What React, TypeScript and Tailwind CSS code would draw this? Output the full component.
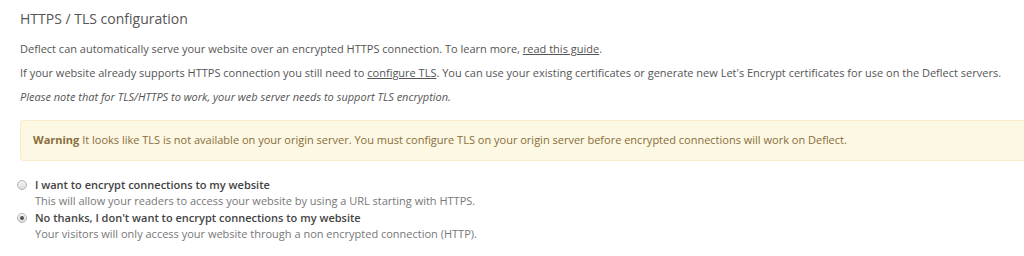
import React from 'react';

const App: React.FC = () => {
    return (
        <div className="w-[1024px] h-[256px] overflow-hidden bg-white text-[#555] font-['Open_Sans',sans-serif]">
            <div className="pl-5 pt-[9px]">
                <h3 className="text-[14px] leading-5 text-[#555]">HTTPS / TLS configuration</h3>

                <div className="mt-[8px] text-[11px] leading-6">
                    <p>
                        Deflect can automatically serve your website over an encrypted HTTPS connection. To learn more,{' '}
                        <a className="underline">read this guide</a>.
                    </p>
                    <p>
                        If your website already supports HTTPS connection you still need to{' '}
                        <a className="underline">configure TLS</a>. You can use your existing certificates or generate new Let's Encrypt certificates for use on the Deflect servers.
                    </p>
                    <p className="italic">Please note that for TLS/HTTPS to work, your web server needs to support TLS encryption.</p>
                </div>

                {/* Warning */}
                <div className="mt-[11px] h-[41px] flex items-center px-3 bg-[#fcf8e3] border border-[#faebcc] border-r-0 rounded-l text-[11px] text-[#8a6d3b]">
                    <span><b className="font-bold">Warning</b> It looks like TLS is not available on your origin server. You must configure TLS on your origin server before encrypted connections will work on Deflect.</span>
                </div>

                {/* Radios */}
                <div className="mt-[16px] -ml-[3px] text-[11px]">
                    <label className="flex items-start gap-[8px]">
                        <span className="mt-[3px] w-[10px] h-[10px] rounded-full border border-[#b5b5b5] bg-gradient-to-b from-[#f4f4f4] to-[#dcdcdc]" />
                        <span className="flex flex-col leading-[16px]">
                            <span className="font-semibold text-[#444]">I want to encrypt connections to my website</span>
                            <span className="text-[#777]">This will allow your readers to access your website by using a URL starting with HTTPS.</span>
                        </span>
                    </label>
                    <label className="mt-[1px] flex items-start gap-[8px]">
                        <span className="mt-[3px] w-[10px] h-[10px] rounded-full border border-[#b5b5b5] bg-gradient-to-b from-[#f4f4f4] to-[#dcdcdc] flex items-center justify-center">
                            <span className="w-[4px] h-[4px] rounded-full bg-[#555]" />
                        </span>
                        <span className="flex flex-col leading-[16px]">
                            <span className="font-semibold text-[#444]">No thanks, I don't want to encrypt connections to my website</span>
                            <span className="text-[#777]">Your visitors will only access your website through a non encrypted connection (HTTP).</span>
                        </span>
                    </label>
                </div>
            </div>
        </div>
    );
};

export default App;
